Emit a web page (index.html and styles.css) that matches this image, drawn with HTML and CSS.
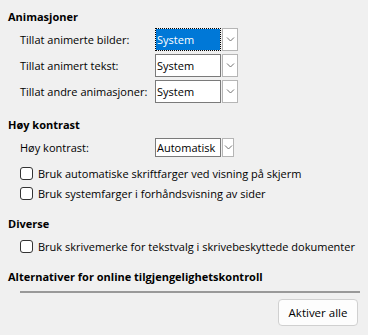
FILE: index.html
```html
<!DOCTYPE html>
<html lang="nb">
<head>
    <meta charset="UTF-8">
    <title>Tilgjengelighet</title>
    <link rel="stylesheet" href="styles.css">
</head>
<body>
    <div class="page">
        <section class="group">
            <h2 class="group-title">Animasjoner</h2>
            <div class="field-row">
                <label>Tillat animerte bilder:</label>
                <div class="combo">
                    <span class="combo-value focused">System</span>
                    <span class="combo-btn"><svg width="9" height="5" viewBox="0 0 9 5"><path d="M1 0.5 L4.5 4 L8 0.5" fill="none" stroke="#707070" stroke-width="1"/></svg></span>
                </div>
            </div>
            <div class="field-row">
                <label>Tillat animert tekst:</label>
                <div class="combo">
                    <span class="combo-value">System</span>
                    <span class="combo-btn"><svg width="9" height="5" viewBox="0 0 9 5"><path d="M1 0.5 L4.5 4 L8 0.5" fill="none" stroke="#707070" stroke-width="1"/></svg></span>
                </div>
            </div>
            <div class="field-row">
                <label>Tillat andre animasjoner:</label>
                <div class="combo">
                    <span class="combo-value">System</span>
                    <span class="combo-btn"><svg width="9" height="5" viewBox="0 0 9 5"><path d="M1 0.5 L4.5 4 L8 0.5" fill="none" stroke="#707070" stroke-width="1"/></svg></span>
                </div>
            </div>
        </section>

        <section class="group group-contrast">
            <h2 class="group-title">Høy kontrast</h2>
            <div class="field-row small">
                <label>Høy kontrast:</label>
                <div class="combo">
                    <span class="combo-value">Automatisk</span>
                    <span class="combo-btn"><svg width="9" height="5" viewBox="0 0 9 5"><path d="M1 0.5 L4.5 4 L8 0.5" fill="none" stroke="#707070" stroke-width="1"/></svg></span>
                </div>
            </div>
            <div class="check-row"><span class="checkbox"></span>Bruk automatiske skriftfarger ved visning på skjerm</div>
            <div class="check-row"><span class="checkbox"></span>Bruk systemfarger i forhåndsvisning av sider</div>
        </section>

        <section class="group group-misc">
            <h2 class="group-title">Diverse</h2>
            <div class="check-row"><span class="checkbox"></span>Bruk skrivemerke for tekstvalg i skrivebeskyttede dokumenter</div>
        </section>

        <section class="group group-online">
            <h2 class="group-title">Alternativer for online tilgjengelighetskontroll</h2>
            <div class="separator"></div>
            <div class="actions">
                <button class="btn">Aktiver alle</button>
            </div>
        </section>
    </div>
</body>
</html>
```

FILE: styles.css
```css
body {
    margin: 0;
    background-color: #f0f0f0;
    font-family: "Open Sans", "Noto Sans", sans-serif;
    font-size: 11px;
    color: #000;
    white-space: nowrap;
}
.page {
    padding-top: 9px;
}
.group-title {
    margin: 0;
    padding-left: 8px;
    font-size: 11px;
    font-weight: bold;
    line-height: 16px;
}
.field-row {
    display: flex;
    align-items: center;
    height: 23px;
    padding-left: 20px;
    margin-top: 3px;
}
.field-row label {
    width: 135px;
}
.combo {
    display: flex;
    height: 100%;
    gap: 1px;
}
.combo-value {
    width: 63px;
    border: 1px solid #7a7a7a;
    background-color: #fff;
    padding-left: 1px;
    display: flex;
    align-items: center;
}
.combo-value.focused {
    border: 1px dotted #000;
    background-color: #0078d7;
    background-clip: padding-box;
    color: #fff;
}
.combo-btn {
    width: 14px;
    border: 1px solid #b5b5b5;
    background-color: #fff;
    display: flex;
    align-items: center;
    justify-content: center;
}
.group-contrast {
    margin-top: 14px;
}
.field-row.small {
    height: 19px;
    margin-top: 5px;
    margin-bottom: 6px;
}
.field-row.small .combo-btn {
    width: 10px;
}
.check-row {
    display: flex;
    align-items: center;
    height: 20px;
    padding-left: 20px;
}
.checkbox {
    width: 11px;
    height: 11px;
    border: 1px solid #333;
    border-radius: 3px;
    background-color: #fff;
    margin-right: 5px;
}
.group-misc {
    margin-top: 13px;
}
.group-misc .group-title {
    margin-bottom: 4px;
}
.group-online {
    margin-top: 13px;
}
.separator {
    height: 2px;
    background-color: #999;
    margin: 6px 8px 0 20px;
}
.actions {
    display: flex;
    justify-content: flex-end;
    padding: 6px 10px 0 0;
}
.btn {
    width: 80px;
    height: 27px;
    border: 1px solid #d0d0d0;
    border-radius: 4px;
    background-color: #fdfdfd;
    font-family: inherit;
    font-size: 11.5px;
    color: #000;
    padding: 0;
}
```
